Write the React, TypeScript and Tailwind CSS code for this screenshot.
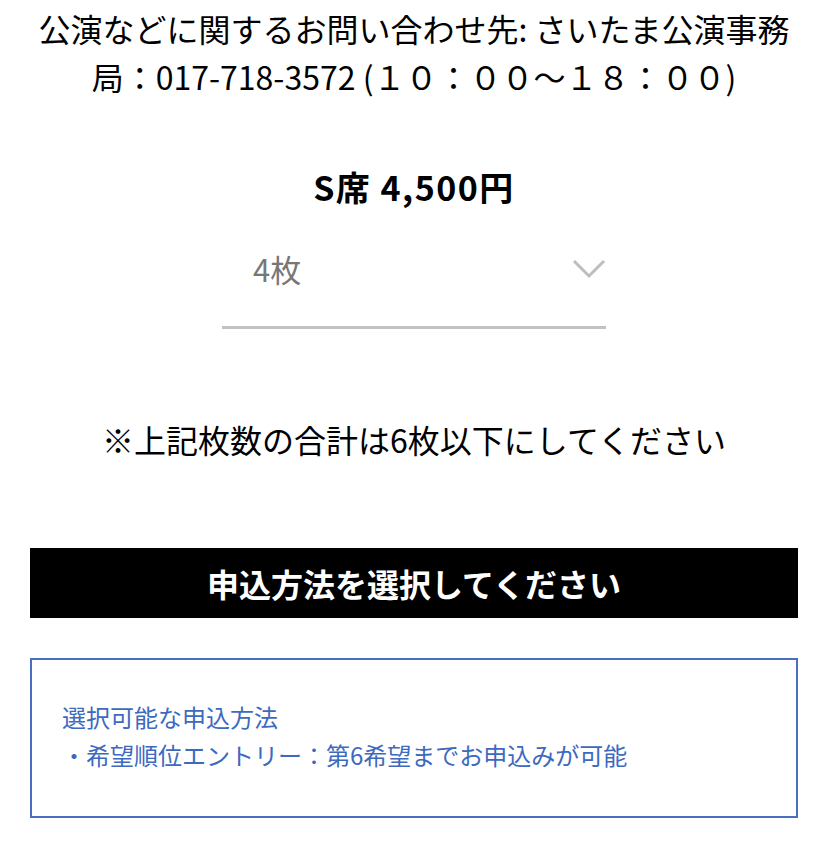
const FONT = "font-['Noto_Sans_CJK_JP','Noto_Sans',sans-serif]";

function Chevron() {
  return (
    <svg width="34" height="20" viewBox="0 0 34 20" fill="none" className="shrink-0">
      <path d="M2 2 L17 17 L32 2" stroke="#bdbdbd" strokeWidth="3" />
    </svg>
  );
}

export default function App() {
  return (
    <div className={`${FONT} bg-white w-[828px] min-h-[841px] px-[30px] text-black`}>
      {/* Contact */}
      <p className="text-center text-[32px] leading-[48px] pt-[4px]">
        公演などに関するお問い合わせ先: さいたま公演事務局：017-718-3572 (１０：００～１８：００)
      </p>

      {/* Seat */}
      <p className="text-center text-[34px] font-bold leading-[40px] mt-[67px] tracking-[1.5px]">S席 4,500円</p>

      {/* Select */}
      <div className="mx-auto w-[384px] mt-[14px] border-b-[3px] border-[#c2c2c2] h-[108px] flex items-center justify-between pl-[31px] pb-[9px]">
        <span className="text-[31px] text-[#777]">4枚</span>
        <Chevron />
      </div>

      {/* Note */}
      <p className="text-center text-[32px] leading-[48px] mt-[86px]">※上記枚数の合計は6枚以下にしてください</p>

      {/* Button */}
      <button className="mt-[85px] w-full h-[70px] bg-black text-white text-[32px] font-bold flex items-center justify-center">
        申込方法を選択してください
      </button>

      {/* Info box */}
      <div className="mt-[40px] border-2 border-[#4a6ec0] h-[160px] px-[30px] pb-[4px] flex flex-col justify-center text-[#3d69bf] text-[24px] leading-[38px]">
        <p>選択可能な申込方法</p>
        <p>・希望順位エントリー：第6希望までお申込みが可能</p>
      </div>
    </div>
  );
}
